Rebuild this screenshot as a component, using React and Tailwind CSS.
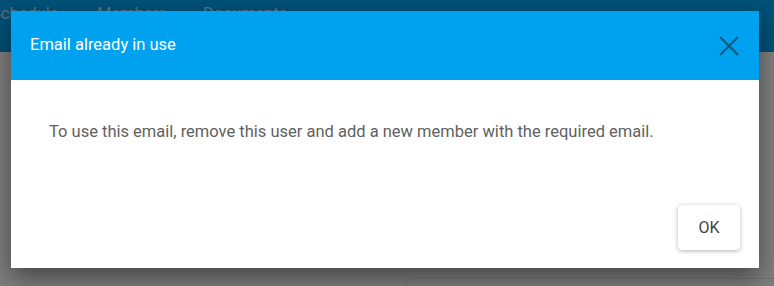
import React from 'react';

function CloseIcon() {
  return (
    <svg width="20" height="20" viewBox="0 0 20 20" fill="none">
      <path d="M1 1L19 19M19 1L1 19" stroke="#0a5a82" strokeWidth="2.2" />
    </svg>
  );
}

export default function App() {
  return (
    <div className="relative w-[774px] h-[286px] overflow-hidden bg-white" style={{ fontFamily: 'Roboto, "Liberation Sans", sans-serif' }}>
      {/* page behind the dialog */}
      <div className="h-[52px] bg-[#00a2f0] flex items-start pt-[2px] text-[16.5px] text-[#b8e4fa]">
        <span className="ml-[-9px] w-[106px]">Schedule</span>
        <span className="w-[106px]">Members</span>
        <span>Documents</span>
      </div>
      <div className="flex pt-[226px] pl-[405px]">
        <div className="flex-1 h-[20px] border-t border-l border-[#e8e8e8] rounded-tl-[6px]" />
      </div>

      <div className="absolute inset-0 bg-black/50" />

      {/* dialog */}
      <div className="absolute left-[11px] top-[11px] w-[748px] h-[257px] bg-white flex flex-col shadow-[0_10px_24px_rgba(0,0,0,0.45)]">
        <div className="h-[69px] bg-[#00a2f0] flex items-center justify-between pl-[19px] pr-[20px]">
          <span className="text-white text-[16.5px]">Email already in use</span>
          <CloseIcon />
        </div>
        <div className="pt-[42px] px-[38px] text-[16.5px] leading-[20px] text-[#616161]">
          To use this email, remove this user and add a new member with the required email.
        </div>
        <div className="mt-auto flex justify-end pr-[19px] pb-[18px]">
          <button className="w-[62px] h-[45px] rounded-[4px] bg-white text-[16px] text-[#424242] shadow-[0_1px_4px_rgba(0,0,0,0.3)]">
            OK
          </button>
        </div>
      </div>
    </div>
  );
}
